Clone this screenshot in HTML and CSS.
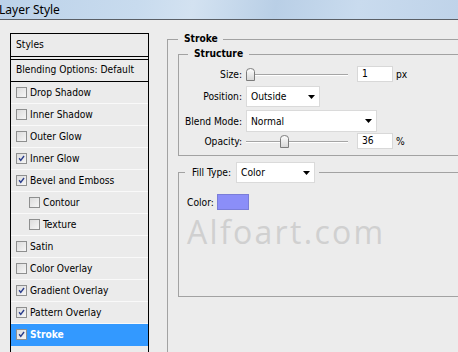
FILE: index.html
```html
<!DOCTYPE html>
<html>
<head>
<meta charset="utf-8">
<link rel="stylesheet" href="styles.css">
</head>
<body>
<div class="titlebar"><span class="title">Layer Style</span></div>
<div class="main">
  <div class="styles-panel">
    <div class="styles-head">Styles</div>
    <div class="blend-head">Blending Options: Default</div>
    <ul class="fx-list">
      <li class="fx"><span class="cb"></span>Drop Shadow</li>
      <li class="fx"><span class="cb"></span>Inner Shadow</li>
      <li class="fx"><span class="cb"></span>Outer Glow</li>
      <li class="fx"><span class="cb checked"><svg viewBox="0 0 11 11"><path d="M2.6 5.2 L4.6 7.8 L8.6 2.4"/></svg></span>Inner Glow</li>
      <li class="fx"><span class="cb checked"><svg viewBox="0 0 11 11"><path d="M2.6 5.2 L4.6 7.8 L8.6 2.4"/></svg></span>Bevel and Emboss</li>
      <li class="fx sub"><span class="cb"></span>Contour</li>
      <li class="fx sub"><span class="cb"></span>Texture</li>
      <li class="fx"><span class="cb"></span>Satin</li>
      <li class="fx"><span class="cb"></span>Color Overlay</li>
      <li class="fx"><span class="cb checked"><svg viewBox="0 0 11 11"><path d="M2.6 5.2 L4.6 7.8 L8.6 2.4"/></svg></span>Gradient Overlay</li>
      <li class="fx"><span class="cb checked"><svg viewBox="0 0 11 11"><path d="M2.6 5.2 L4.6 7.8 L8.6 2.4"/></svg></span>Pattern Overlay</li>
      <li class="fx active"><span class="cb checked"><svg viewBox="0 0 11 11"><path d="M2.6 5.2 L4.6 7.8 L8.6 2.4"/></svg></span>Stroke</li>
    </ul>
  </div>
  <div class="content">
    <fieldset class="group stroke">
      <legend class="stroke-legend">Stroke</legend>
      <fieldset class="group structure">
        <legend class="structure-legend">Structure</legend>
        <div class="row row-size">
          <span class="label">Size:</span>
          <div class="slider"><span class="thumb" style="left:0px"><svg viewBox="0 0 9 13"><defs><linearGradient id="tg" x1="0" y1="0" x2="0" y2="1"><stop offset="0" stop-color="#ffffff"/><stop offset="1" stop-color="#d6d6d6"/></linearGradient></defs><path d="M0.5 12.5 V3.5 Q0.5 0.5 4.5 0.5 Q8.5 0.5 8.5 3.5 V12.5 Z" fill="url(#tg)" stroke="#7c7c7c"/></svg></span></div>
          <span class="input">1</span>
          <span class="unit">px</span>
        </div>
        <div class="row row-position">
          <span class="label">Position:</span>
          <div class="select sel-position"><span>Outside</span><svg class="arrow" viewBox="0 0 7 4"><path d="M0 0 H7 L3.5 4 Z"/></svg></div>
        </div>
        <div class="row row-blend">
          <span class="label">Blend Mode:</span>
          <div class="select sel-blend"><span>Normal</span><svg class="arrow" viewBox="0 0 7 4"><path d="M0 0 H7 L3.5 4 Z"/></svg></div>
        </div>
        <div class="row row-opacity">
          <span class="label">Opacity:</span>
          <div class="slider"><span class="thumb" style="left:34px"><svg viewBox="0 0 9 13"><path d="M0.5 12.5 V3.5 Q0.5 0.5 4.5 0.5 Q8.5 0.5 8.5 3.5 V12.5 Z" fill="url(#tg)" stroke="#7c7c7c"/></svg></span></div>
          <span class="input">36</span>
          <span class="unit">%</span>
        </div>
      </fieldset>
      <fieldset class="group fill">
        <legend class="fill-legend">
          <span class="fill-label">Fill Type:</span>
          <div class="select sel-fill"><span>Color</span><svg class="arrow" viewBox="0 0 7 4"><path d="M0 0 H7 L3.5 4 Z"/></svg></div>
        </legend>
        <div class="color-row">
          <span class="color-label">Color:</span>
          <span class="swatch"></span>
        </div>
        <div class="watermark">Alfoart.com</div>
      </fieldset>
    </fieldset>
  </div>
</div>
</body>
</html>
```

FILE: styles.css
```css
* { box-sizing: border-box; }
html, body { margin: 0; padding: 0; }
body {
  width: 458px;
  height: 352px;
  overflow: hidden;
  background: #ececec;
  font-family: "DejaVu Sans Condensed", "Liberation Sans", sans-serif;
  font-size: 10.2px;
  color: #000;
}
.titlebar {
  height: 20px;
  border-bottom: 1px solid #5a5f66;
  background: linear-gradient(100deg, #bcd2e9 0%, #c8dbee 30%, #d3e2f1 42%, #b9cfe6 60%, #c9dbee 78%, #bfd3e9 100%);
  overflow: hidden;
}
.title {
  display: block;
  margin-left: -1px;
  font-family: "Noto Sans", "Liberation Sans", sans-serif;
  font-size: 12px;
  line-height: 19px;
  color: #000;
}
.main {
  display: flex;
  align-items: stretch;
  height: 332px;
  padding: 13px 0 0 10px;
}
.styles-panel {
  width: 139px;
  flex: none;
  border: 1px solid #000;
  border-bottom: none;
  background: #ebebeb;
}
.styles-head {
  height: 23px;
  line-height: 21px;
  padding-left: 5px;
  border-bottom: 1px solid #000;
  margin-bottom: 2px;
}
.blend-head {
  height: 23px;
  line-height: 20px;
  padding-left: 5px;
  border-top: 1px solid #000;
  border-bottom: 1px solid #000;
}
.fx-list {
  list-style: none;
  margin: 0;
  padding: 0;
}
.fx {
  display: flex;
  align-items: center;
  height: 22px;
  padding-left: 5px;
  padding-bottom: 1px;
  border-bottom: 1px solid #f9f9f9;
}
.fx.sub { padding-left: 18px; }
.fx.active {
  background: #3399ff;
  color: #fff;
  font-weight: bold;
  border-bottom-color: #3399ff;
}
.cb {
  width: 11px;
  height: 11px;
  margin-right: 3px;
  border: 1px solid #8e8f8f;
  background: linear-gradient(135deg, #dcdcdc, #f6f6f6);
  display: flex;
  flex: none;
}
.cb svg { width: 9px; height: 9px; }
.cb svg path {
  fill: none;
  stroke: #2a3d8c;
  stroke-width: 1.7;
}
.content {
  margin-left: 18px;
  margin-top: -1px;
  width: 330px;
  flex: none;
}
.group {
  margin: 0;
  min-width: 0;
  border: 1px solid #a2a2a2;
}
.group legend {
  font-weight: bold;
  line-height: 14px;
  margin: 0;
}
.stroke {
  height: 360px;
  padding: 1px 0 0 10px;
}
.stroke-legend { padding: 0 5px 0 6px; }
.structure {
  padding: 5px 0 6px 9px;
  width: 300px;
}
.structure-legend { padding: 0 6px; }
.row {
  display: flex;
  align-items: center;
  margin-left: -6px;
}
.row-size { height: 16px; }
.row-position { height: 21px; margin-top: 4px; }
.row-blend { height: 22px; margin-top: 3px; }
.row-opacity { height: 16px; margin-top: 1px; }
.label {
  width: 60px;
  text-align: right;
  margin-right: 4px;
  white-space: nowrap;
}
.slider {
  position: relative;
  width: 102px;
  height: 16px;
  margin-right: 9px;
}
.slider::before {
  content: "";
  position: absolute;
  left: 0;
  right: 0;
  top: 8px;
  height: 1px;
  background: #a5a5a5;
  box-shadow: 0 1px 0 #fff;
}
.thumb {
  position: absolute;
  top: 2px;
  width: 9px;
  height: 13px;
}
.thumb svg { width: 9px; height: 13px; display: block; }
.input {
  width: 36px;
  height: 16px;
  line-height: 14px;
  background: #fff;
  border: 1px solid #d8d8d8;
  padding-left: 4px;
}
.unit { margin-left: 3px; }
.select {
  display: flex;
  align-items: center;
  justify-content: space-between;
  height: 100%;
  background: #fff;
  border: 1px solid #dadada;
  padding: 0 4px 0 4px;
  font-weight: normal;
}
.arrow { width: 7px; height: 4px; display: block; }
.arrow path { fill: #000; }
.sel-position { width: 74px; }
.sel-blend { width: 131px; }
.fill {
  margin-top: 6px;
  width: 300px;
  height: 135px;
  padding: 0 0 0 6px;
}
.fill-legend {
  display: flex;
  align-items: center;
  padding: 0 4px 0 7px;
  height: 21px;
}
.fill-label { font-weight: normal; margin-right: 5px; }
.sel-fill { width: 79px; height: 21px; }
.color-row {
  display: flex;
  align-items: center;
  margin-top: 11px;
  margin-left: 2px;
  height: 16px;
}
.color-label { margin-right: 3px; }
.swatch {
  width: 32px;
  height: 16px;
  background: #8b8ef8;
  border: 1px solid #7a7dd8;
}
.watermark {
  margin-top: 6px;
  margin-left: 2px;
  font-family: "Open Sans", "DejaVu Sans", sans-serif;
  font-size: 32px;
  line-height: 32px;
  letter-spacing: 2.3px;
  color: #d0d0d0;
}
```
